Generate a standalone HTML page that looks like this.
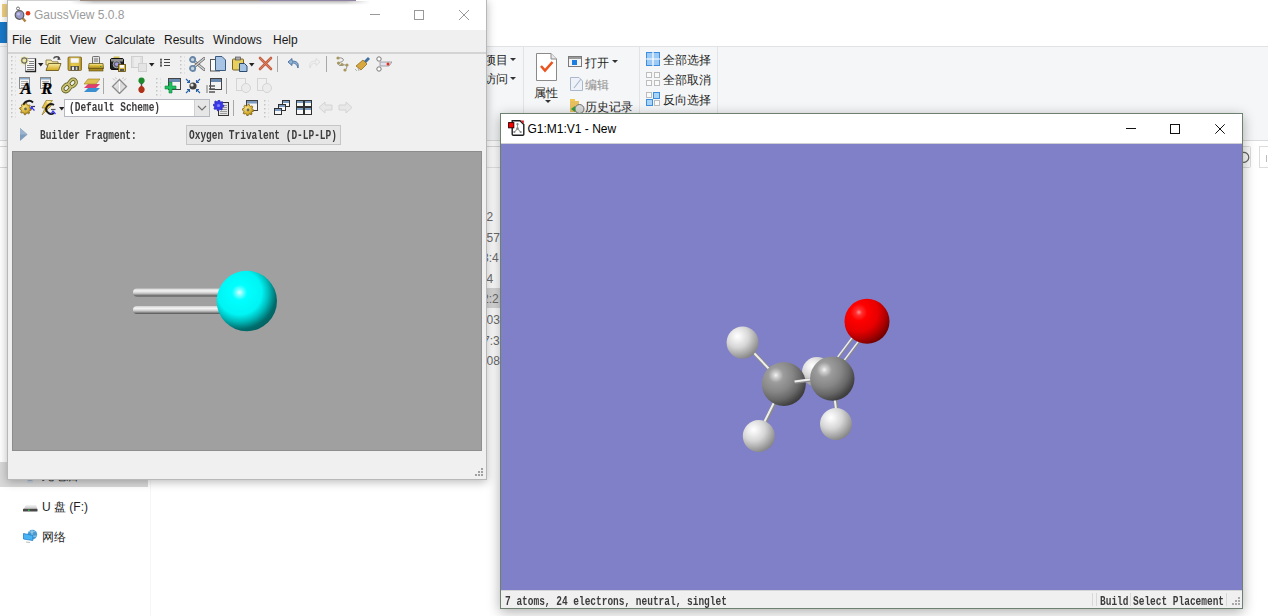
<!DOCTYPE html>
<html><head><meta charset="utf-8">
<style>
*{box-sizing:border-box;margin:0;padding:0}
html,body{width:1268px;height:616px;overflow:hidden;background:#fff;font-family:"Liberation Sans",sans-serif;position:relative}
.abs{position:absolute;display:block}
</style></head><body>

<div class="abs" style="left:0px;top:0px;width:1268px;height:616px;background:#fff;"></div>
<div class="abs" style="left:2px;top:4px;width:5px;height:13px;background:#f0d080;"></div>
<div class="abs" style="left:0px;top:22px;width:7px;height:21px;background:#1979ca;"></div>
<div class="abs" style="left:0px;top:43px;width:7px;height:3px;background:#f5f6f7;"></div>
<div class="abs" style="left:0px;top:46px;width:1268px;height:95px;background:#f5f6f7;border-top:1px solid #e1e2e3;border-bottom:1px solid #dadbdc"></div>
<div class="abs" style="left:484px;top:53.84px;font-size:12px;line-height:12px;color:#1e1e1e;font-family:"Liberation Sans",sans-serif;white-space:nowrap;letter-spacing:-0.5px">项目</div>
<svg class="abs" style="left:510px;top:58px;" width="6" height="4" viewBox="0 0 6 4"><path d="M0 0H6L3 3Z" fill="#333"/></svg>
<div class="abs" style="left:484px;top:72.84px;font-size:12px;line-height:12px;color:#1e1e1e;font-family:"Liberation Sans",sans-serif;white-space:nowrap;letter-spacing:-0.5px">访问</div>
<svg class="abs" style="left:510px;top:77px;" width="6" height="4" viewBox="0 0 6 4"><path d="M0 0H6L3 3Z" fill="#333"/></svg>
<div class="abs" style="left:523px;top:47px;width:1px;height:89px;background:#e2e3e4;"></div>
<svg class="abs" style="left:535px;top:52px;" width="23" height="30" viewBox="0 0 23 30"><path d="M1.5 1.5H16L21.5 7V28.5H1.5Z" fill="#fff" stroke="#8a8a8a"/><path d="M16 1.5V7H21.5" fill="#e8e8e8" stroke="#8a8a8a"/><path d="M6 14L10 18.5L17.5 10" fill="none" stroke="#e9541f" stroke-width="2.6"/></svg>
<div class="abs" style="left:534px;top:86.84px;font-size:12px;line-height:12px;color:#1e1e1e;font-family:"Liberation Sans",sans-serif;white-space:nowrap;letter-spacing:-0.5px">属性</div>
<svg class="abs" style="left:545px;top:100px;" width="6" height="4" viewBox="0 0 6 4"><path d="M0 0H6L3 3Z" fill="#333"/></svg>
<svg class="abs" style="left:568px;top:56px;" width="14" height="11" viewBox="0 0 14 11"><rect x=".5" y=".5" width="13" height="10" fill="#f4f4f4" stroke="#7a7a7a"/><rect x="1" y="1" width="12" height="2" fill="#9a9a9a"/><rect x="4" y="4" width="5" height="5" fill="#1a7fe0"/></svg>
<div class="abs" style="left:585px;top:56.84px;font-size:12px;line-height:12px;color:#1e1e1e;font-family:"Liberation Sans",sans-serif;white-space:nowrap;letter-spacing:-0.5px">打开</div>
<svg class="abs" style="left:612px;top:60px;" width="6" height="4" viewBox="0 0 6 4"><path d="M0 0H6L3 3Z" fill="#333"/></svg>
<svg class="abs" style="left:570px;top:77px;" width="13" height="14" viewBox="0 0 13 14"><path d="M.5 .5H9L12.5 4V13.5H.5Z" fill="#eef2f8" stroke="#aab8cc"/><path d="M4 11L11 2" stroke="#aab8cc" stroke-width="1.2"/></svg>
<div class="abs" style="left:585px;top:78.84px;font-size:12px;line-height:12px;color:#8d8d8d;font-family:"Liberation Sans",sans-serif;white-space:nowrap;letter-spacing:-0.5px">编辑</div>
<svg class="abs" style="left:569px;top:98px;" width="16" height="16" viewBox="0 0 16 16"><path d="M1 1H6V14H1Z" fill="#f0c850"/><rect x="1" y="3" width="9" height="11" fill="#e8c060"/><circle cx="10.5" cy="11" r="4.5" fill="#d8d8d8" stroke="#707070"/><path d="M2 11L6 8V14Z" fill="#2aa040"/></svg>
<div class="abs" style="left:585px;top:100.84px;font-size:12px;line-height:12px;color:#1e1e1e;font-family:"Liberation Sans",sans-serif;white-space:nowrap;letter-spacing:-0.5px">历史记录</div>
<div class="abs" style="left:639px;top:47px;width:1px;height:89px;background:#e2e3e4;"></div>
<svg class="abs" style="left:646px;top:52px;" width="14" height="14" viewBox="0 0 14 14"><rect x=".5" y=".5" width="13" height="13" fill="#9ccaf5" stroke="#3d8ee0"/><path d="M7 0V14M0 7H14" stroke="#fff" stroke-width="1.2"/></svg>
<div class="abs" style="left:663px;top:53.84px;font-size:12px;line-height:12px;color:#1e1e1e;font-family:"Liberation Sans",sans-serif;white-space:nowrap;letter-spacing:-0.5px">全部选择</div>
<svg class="abs" style="left:646px;top:72px;" width="14" height="14" viewBox="0 0 14 14"><rect x=".5" y=".5" width="5" height="5" fill="#fafafa" stroke="#bdbdbd"/><rect x="8.5" y=".5" width="5" height="5" fill="#fafafa" stroke="#bdbdbd"/><rect x=".5" y="8.5" width="5" height="5" fill="#fafafa" stroke="#bdbdbd"/><rect x="8.5" y="8.5" width="5" height="5" fill="#fafafa" stroke="#bdbdbd"/></svg>
<div class="abs" style="left:663px;top:73.84px;font-size:12px;line-height:12px;color:#1e1e1e;font-family:"Liberation Sans",sans-serif;white-space:nowrap;letter-spacing:-0.5px">全部取消</div>
<svg class="abs" style="left:646px;top:92px;" width="14" height="14" viewBox="0 0 14 14"><rect x=".5" y=".5" width="5" height="5" fill="#fafafa" stroke="#bdbdbd"/><rect x="7.5" y=".5" width="6" height="6" fill="#a8d4f8" stroke="#3d8ee0"/><rect x=".5" y="7.5" width="6" height="6" fill="#a8d4f8" stroke="#3d8ee0"/><rect x="8.5" y="8.5" width="5" height="5" fill="#fafafa" stroke="#bdbdbd"/></svg>
<div class="abs" style="left:663px;top:93.84px;font-size:12px;line-height:12px;color:#1e1e1e;font-family:"Liberation Sans",sans-serif;white-space:nowrap;letter-spacing:-0.5px">反向选择</div>
<div class="abs" style="left:717px;top:47px;width:1px;height:89px;background:#e2e3e4;"></div>
<div class="abs" style="left:0px;top:146px;width:1236px;height:22px;background:#fff;border-top:1px solid #d9d9d9;border-bottom:1px solid #d9d9d9"></div>
<svg class="abs" style="left:1226px;top:146px;" width="42" height="22" viewBox="0 0 42 22"><rect x=".5" y=".5" width="24" height="21" rx="1" fill="#fafafa" stroke="#dcdcdc"/><path d="M17 7.5A5 5 0 1 1 16.5 17" fill="none" stroke="#666" stroke-width="1.3" transform="translate(-0.5 -1)"/><rect x="33.5" y=".5" width="20" height="21" fill="#fff" stroke="#dcdcdc"/><path d="M40.5 9V16" stroke="#bbb" stroke-width="1"/></svg>
<div class="abs" style="left:486px;top:167px;width:14px;height:1px;background:#e5e5e5;"></div>
<div class="abs" style="left:150px;top:168px;width:1px;height:448px;background:#f6f6f6;"></div>
<div class="abs" style="left:0px;top:462px;width:148px;height:25px;background:#d9d9d9;"></div>
<svg class="abs" style="left:22px;top:476px;" width="16" height="8" viewBox="0 0 16 8"><path d="M2 3H14L9 5H7Z" fill="#9ab0c8"/><path d="M5 6H11" stroke="#b8c8d8"/></svg>
<svg class="abs" style="left:22px;top:504px;" width="16" height="9" viewBox="0 0 16 9"><path d="M1.5 5L4 1.5H14L15.5 5Z" fill="#d4d4d4"/><path d="M4 2H14" stroke="#f0f0f0" stroke-width="1"/><rect x="1" y="4.8" width="14.5" height="2.8" rx=".6" fill="#484848"/><rect x="6" y="5.6" width="1.6" height="1.2" fill="#30d040"/></svg>
<div class="abs" style="left:42px;top:469.84px;font-size:12px;line-height:12px;color:#1e1e1e;font-family:"Liberation Sans",sans-serif;white-space:nowrap;">此电脑</div>
<div class="abs" style="left:42px;top:501.34px;font-size:12px;line-height:12px;color:#1e1e1e;font-family:"Liberation Sans",sans-serif;white-space:nowrap;letter-spacing:-0.6px">U 盘 (F:)</div>
<svg class="abs" style="left:22px;top:528px;" width="16" height="16" viewBox="0 0 16 16"><circle cx="10.4" cy="6.6" r="4.8" fill="#4a9ad0"/><path d="M7 3C9 5 11 4 13 3M6.5 8C9 7 11 9 14.5 8M10 2V11" stroke="#b8e0f4" stroke-width=".8" fill="none"/><path d="M1.5 5.5L10.8 7.5V12.5L1.5 11Z" fill="#48b4f4" stroke="#2080c8" stroke-width=".8"/><path d="M4 13.5L8 14V15L4 14.5Z" fill="#bbb"/></svg>
<div class="abs" style="left:42px;top:530.84px;font-size:12px;line-height:12px;color:#1e1e1e;font-family:"Liberation Sans",sans-serif;white-space:nowrap;">网络</div>
<div class="abs" style="left:486px;top:288px;width:14px;height:20px;background:#d9d9d9;"></div>
<div class="abs" style="left:486px;top:200px;width:14px;height:180px;overflow:hidden">
<div class="abs" style="left:0.5px;top:9.84px;font-size:12px;line-height:14px;color:#6d6d6d;white-space:nowrap;font-family:"Liberation Sans",sans-serif">2</div>
<div class="abs" style="left:0.5px;top:30.84px;font-size:12px;line-height:14px;color:#6d6d6d;white-space:nowrap;font-family:"Liberation Sans",sans-serif">57</div>
<div class="abs" style="left:-4px;top:50.84px;font-size:12px;line-height:14px;color:#6d6d6d;white-space:nowrap;font-family:"Liberation Sans",sans-serif">3:4</div>
<div class="abs" style="left:0.5px;top:71.84px;font-size:12px;line-height:14px;color:#6d6d6d;white-space:nowrap;font-family:"Liberation Sans",sans-serif">4</div>
<div class="abs" style="left:-4px;top:91.84px;font-size:12px;line-height:14px;color:#6d6d6d;white-space:nowrap;font-family:"Liberation Sans",sans-serif">2:2</div>
<div class="abs" style="left:0.5px;top:112.84px;font-size:12px;line-height:14px;color:#6d6d6d;white-space:nowrap;font-family:"Liberation Sans",sans-serif">03</div>
<div class="abs" style="left:-3px;top:133.84px;font-size:12px;line-height:14px;color:#6d6d6d;white-space:nowrap;font-family:"Liberation Sans",sans-serif">7:3</div>
<div class="abs" style="left:0.5px;top:153.84px;font-size:12px;line-height:14px;color:#6d6d6d;white-space:nowrap;font-family:"Liberation Sans",sans-serif">08</div>
</div>
<div class="abs" style="left:7px;top:-1px;width:480px;height:481px;background:#f0f0f0;border:1px solid #b8b8b8;box-shadow:0 2px 9px rgba(0,0,0,.28)"></div>
<div class="abs" style="left:8px;top:0px;width:478px;height:30px;background:#fff;"></div>
<svg class="abs" style="left:14px;top:6px;" width="17" height="17" viewBox="0 0 17 17"><circle cx="4" cy="2.5" r="1.5" fill="#fff" stroke="#666" stroke-width=".9"/><path d="M4.5 4L5.5 6" stroke="#666" stroke-width="1"/><path d="M8.5 12L11.5 15.5" stroke="#b08040" stroke-width="2.4"/><circle cx="5.5" cy="9" r="4.3" fill="#9a9ac8" stroke="#5a5a5a" stroke-width="1.2"/><circle cx="4.5" cy="8" r="1.5" fill="#c0c0e8"/><circle cx="14" cy="7.2" r="2.3" fill="#e03010"/></svg>
<div class="abs" style="left:34px;top:8.84px;font-size:12px;line-height:12px;color:#9b9b9b;font-family:"Liberation Sans",sans-serif;white-space:nowrap;">GaussView 5.0.8</div>
<div class="abs" style="left:370px;top:14px;width:10px;height:1px;background:#999;"></div>
<svg class="abs" style="left:414px;top:10px;" width="10" height="10" viewBox="0 0 10 10"><rect x=".5" y=".5" width="9" height="9" fill="none" stroke="#999"/></svg>
<svg class="abs" style="left:459px;top:10px;" width="10" height="10" viewBox="0 0 10 10"><path d="M0 0L10 10M10 0L0 10" stroke="#999" stroke-width="1"/></svg>
<div class="abs" style="left:8px;top:0px;width:72px;height:1px;background:#d0d0d0;"></div>
<div class="abs" style="left:80px;top:0px;width:180px;height:1px;background:#9a8a80;"></div>
<div class="abs" style="left:260px;top:0px;width:96px;height:1px;background:#8e82a0;"></div>
<div class="abs" style="left:70px;top:1px;width:300px;height:4px;background:linear-gradient(rgba(0,0,0,.28),rgba(0,0,0,0));-webkit-mask-image:linear-gradient(90deg,transparent,#000 8%,#000 92%,transparent)"></div>
<div class="abs" style="left:12px;top:34.34px;font-size:12px;line-height:12px;color:#1a1a1a;font-family:"Liberation Sans",sans-serif;white-space:nowrap;">File</div>
<div class="abs" style="left:40px;top:34.34px;font-size:12px;line-height:12px;color:#1a1a1a;font-family:"Liberation Sans",sans-serif;white-space:nowrap;">Edit</div>
<div class="abs" style="left:70px;top:34.34px;font-size:12px;line-height:12px;color:#1a1a1a;font-family:"Liberation Sans",sans-serif;white-space:nowrap;">View</div>
<div class="abs" style="left:105px;top:34.34px;font-size:12px;line-height:12px;color:#1a1a1a;font-family:"Liberation Sans",sans-serif;white-space:nowrap;">Calculate</div>
<div class="abs" style="left:164px;top:34.34px;font-size:12px;line-height:12px;color:#1a1a1a;font-family:"Liberation Sans",sans-serif;white-space:nowrap;">Results</div>
<div class="abs" style="left:213px;top:34.34px;font-size:12px;line-height:12px;color:#1a1a1a;font-family:"Liberation Sans",sans-serif;white-space:nowrap;">Windows</div>
<div class="abs" style="left:273px;top:34.34px;font-size:12px;line-height:12px;color:#1a1a1a;font-family:"Liberation Sans",sans-serif;white-space:nowrap;">Help</div>
<div class="abs" style="left:8px;top:52px;width:478px;height:2px;background:#d4d4d4;"></div>
<svg class="abs" style="left:11px;top:56px;" width="6" height="20" viewBox="0 0 6 20"><rect x="0" y="0" width="1.5" height="1.5" fill="#c4c4c4"/><rect x="4" y="0.5" width="1" height="1" fill="#d0d0d0"/><rect x="0" y="4" width="1.5" height="1.5" fill="#c4c4c4"/><rect x="4" y="4.5" width="1" height="1" fill="#d0d0d0"/><rect x="0" y="8" width="1.5" height="1.5" fill="#c4c4c4"/><rect x="4" y="8.5" width="1" height="1" fill="#d0d0d0"/><rect x="0" y="12" width="1.5" height="1.5" fill="#c4c4c4"/><rect x="4" y="12.5" width="1" height="1" fill="#d0d0d0"/><rect x="0" y="16" width="1.5" height="1.5" fill="#c4c4c4"/><rect x="4" y="16.5" width="1" height="1" fill="#d0d0d0"/></svg>
<svg class="abs" style="left:180px;top:56px;" width="6" height="20" viewBox="0 0 6 20"><rect x="0" y="0" width="1.5" height="1.5" fill="#c4c4c4"/><rect x="4" y="0.5" width="1" height="1" fill="#d0d0d0"/><rect x="0" y="4" width="1.5" height="1.5" fill="#c4c4c4"/><rect x="4" y="4.5" width="1" height="1" fill="#d0d0d0"/><rect x="0" y="8" width="1.5" height="1.5" fill="#c4c4c4"/><rect x="4" y="8.5" width="1" height="1" fill="#d0d0d0"/><rect x="0" y="12" width="1.5" height="1.5" fill="#c4c4c4"/><rect x="4" y="12.5" width="1" height="1" fill="#d0d0d0"/><rect x="0" y="16" width="1.5" height="1.5" fill="#c4c4c4"/><rect x="4" y="16.5" width="1" height="1" fill="#d0d0d0"/></svg>
<svg class="abs" style="left:11px;top:78px;" width="6" height="20" viewBox="0 0 6 20"><rect x="0" y="0" width="1.5" height="1.5" fill="#c4c4c4"/><rect x="4" y="0.5" width="1" height="1" fill="#d0d0d0"/><rect x="0" y="4" width="1.5" height="1.5" fill="#c4c4c4"/><rect x="4" y="4.5" width="1" height="1" fill="#d0d0d0"/><rect x="0" y="8" width="1.5" height="1.5" fill="#c4c4c4"/><rect x="4" y="8.5" width="1" height="1" fill="#d0d0d0"/><rect x="0" y="12" width="1.5" height="1.5" fill="#c4c4c4"/><rect x="4" y="12.5" width="1" height="1" fill="#d0d0d0"/><rect x="0" y="16" width="1.5" height="1.5" fill="#c4c4c4"/><rect x="4" y="16.5" width="1" height="1" fill="#d0d0d0"/></svg>
<svg class="abs" style="left:156px;top:78px;" width="6" height="20" viewBox="0 0 6 20"><rect x="0" y="0" width="1.5" height="1.5" fill="#c4c4c4"/><rect x="4" y="0.5" width="1" height="1" fill="#d0d0d0"/><rect x="0" y="4" width="1.5" height="1.5" fill="#c4c4c4"/><rect x="4" y="4.5" width="1" height="1" fill="#d0d0d0"/><rect x="0" y="8" width="1.5" height="1.5" fill="#c4c4c4"/><rect x="4" y="8.5" width="1" height="1" fill="#d0d0d0"/><rect x="0" y="12" width="1.5" height="1.5" fill="#c4c4c4"/><rect x="4" y="12.5" width="1" height="1" fill="#d0d0d0"/><rect x="0" y="16" width="1.5" height="1.5" fill="#c4c4c4"/><rect x="4" y="16.5" width="1" height="1" fill="#d0d0d0"/></svg>
<svg class="abs" style="left:11px;top:100px;" width="6" height="20" viewBox="0 0 6 20"><rect x="0" y="0" width="1.5" height="1.5" fill="#c4c4c4"/><rect x="4" y="0.5" width="1" height="1" fill="#d0d0d0"/><rect x="0" y="4" width="1.5" height="1.5" fill="#c4c4c4"/><rect x="4" y="4.5" width="1" height="1" fill="#d0d0d0"/><rect x="0" y="8" width="1.5" height="1.5" fill="#c4c4c4"/><rect x="4" y="8.5" width="1" height="1" fill="#d0d0d0"/><rect x="0" y="12" width="1.5" height="1.5" fill="#c4c4c4"/><rect x="4" y="12.5" width="1" height="1" fill="#d0d0d0"/><rect x="0" y="16" width="1.5" height="1.5" fill="#c4c4c4"/><rect x="4" y="16.5" width="1" height="1" fill="#d0d0d0"/></svg>
<svg class="abs" style="left:264px;top:100px;" width="6" height="20" viewBox="0 0 6 20"><rect x="0" y="0" width="1.5" height="1.5" fill="#c4c4c4"/><rect x="4" y="0.5" width="1" height="1" fill="#d0d0d0"/><rect x="0" y="4" width="1.5" height="1.5" fill="#c4c4c4"/><rect x="4" y="4.5" width="1" height="1" fill="#d0d0d0"/><rect x="0" y="8" width="1.5" height="1.5" fill="#c4c4c4"/><rect x="4" y="8.5" width="1" height="1" fill="#d0d0d0"/><rect x="0" y="12" width="1.5" height="1.5" fill="#c4c4c4"/><rect x="4" y="12.5" width="1" height="1" fill="#d0d0d0"/><rect x="0" y="16" width="1.5" height="1.5" fill="#c4c4c4"/><rect x="4" y="16.5" width="1" height="1" fill="#d0d0d0"/></svg>
<svg class="abs" style="left:19px;top:55px;" width="18" height="18" viewBox="0 0 18 18"><rect x="6.5" y="3.5" width="10" height="13" fill="#f8f8f8" stroke="#909090"/><path d="M16.5 3.5V16.5H6.5" fill="none" stroke="#222" stroke-width="1.3"/><path d="M10 6.5H15M10 8.5H15M8 10.5H15M8 12.5H15M8 14.5H15" stroke="#707070" stroke-width=".9"/><g stroke="#ece49a" stroke-width="1.5"><path d="M5.3 .8V10.2M.6 5.5H10M2 2.2L8.6 8.8M8.6 2.2L2 8.8"/></g><circle cx="5.3" cy="5.5" r="2.6" fill="#e8e0a8" stroke="#6a6a5a" stroke-width="1.1"/><circle cx="5.3" cy="5.5" r="1" fill="#f4eca0"/></svg>
<svg class="abs" style="left:38px;top:63px;" width="6" height="4" viewBox="0 0 6 4"><path d="M0 0H5.5L2.75 3.5Z" fill="#222"/></svg>
<svg class="abs" style="left:45px;top:55px;" width="17" height="17" viewBox="0 0 17 17"><defs><linearGradient id="fo" x1="0" y1="0" x2="0" y2="1"><stop offset="0" stop-color="#f6eca8"/><stop offset="1" stop-color="#d4a818"/></linearGradient></defs><path d="M8.5 3.5A3.5 3 0 0 1 14.5 3" fill="none" stroke="#505050" stroke-width="1.4"/><path d="M13 1.5L16 4.5L12.5 5Z" fill="#404040"/><path d="M1 5H6L7.5 6.8H13V10H1Z" fill="#efe3a0" stroke="#7a6a30" stroke-width=".8"/><path d="M1 15.5L3.5 8.5H16L13.5 15.5Z" fill="url(#fo)" stroke="#6a5a20" stroke-width=".9"/></svg>
<svg class="abs" style="left:67px;top:56px;" width="16" height="16" viewBox="0 0 16 16"><defs><linearGradient id="sv" x1="0" y1="0" x2="1" y2="0"><stop offset="0" stop-color="#b89828"/><stop offset=".3" stop-color="#e8cc50"/><stop offset=".8" stop-color="#e0c040"/><stop offset="1" stop-color="#a08018"/></linearGradient></defs><rect x="1" y="1" width="13.5" height="13.5" rx="1" fill="url(#sv)" stroke="#786020" stroke-width=".8"/><rect x="3.5" y="2" width="8.5" height="5" fill="#f8f8f8" stroke="#c8b060" stroke-width=".5"/><rect x="3.5" y="10" width="8.5" height="4.5" fill="#505050"/><rect x="5" y="10.8" width="2" height="3.2" fill="#e8e8e8"/><rect x="8.8" y="10.8" width="1.5" height="3.2" fill="#c8c8c8"/></svg>
<svg class="abs" style="left:88px;top:56px;" width="16" height="16" viewBox="0 0 16 16"><defs><linearGradient id="pr" x1="0" y1="0" x2="0" y2="1"><stop offset="0" stop-color="#f4ecb0"/><stop offset=".4" stop-color="#e0c040"/><stop offset="1" stop-color="#a08018"/></linearGradient></defs><rect x="4.5" y=".5" width="7" height="7.5" rx=".8" fill="#e4e4e4" stroke="#606060" stroke-width=".9"/><path d="M6 3H10M6 5H10" stroke="#606060" stroke-width=".9"/><path d="M1 7.5H15L15.5 12.5H.5Z" fill="url(#pr)" stroke="#6a5a20" stroke-width=".8"/><rect x="1" y="12.5" width="14" height="2.5" fill="#a88a20" stroke="#5a4a10" stroke-width=".6"/><rect x="12" y="10" width="1.5" height="1" fill="#40a040"/></svg>
<svg class="abs" style="left:110px;top:56px;" width="16" height="16" viewBox="0 0 16 16"><rect x="3.5" y=".5" width="6" height="2.5" fill="#d0b850"/><rect x=".5" y="2.5" width="13" height="11" rx="1.5" fill="#202020" stroke="#101010"/><rect x="1" y="3" width="12" height="2.5" fill="#909090"/><circle cx="6.8" cy="8.3" r="3.6" fill="#606070" stroke="#a8a8a8" stroke-width="1"/><circle cx="6.8" cy="8.3" r="1.8" fill="#a8a0e0"/><rect x="8.5" y="8.5" width="7" height="7" fill="#d8b840" stroke="#5a4a10" stroke-width=".8"/><rect x="10" y="9" width="4" height="2.8" fill="#fafafa"/><rect x="10" y="13" width="4" height="2" fill="#555"/></svg>
<svg class="abs" style="left:131px;top:56px;" width="16" height="16" viewBox="0 0 16 16"><rect x=".5" y=".5" width="11" height="11" fill="#ececec" stroke="#d0d0d0"/><path d="M2 1V11M10 1V11" stroke="#d8d8d8"/><rect x="7.5" y="7.5" width="8" height="8" fill="#e4e4e4" stroke="#d0d0d0"/></svg>
<svg class="abs" style="left:149px;top:63px;" width="6" height="4" viewBox="0 0 6 4"><path d="M0 0H5.5L2.75 3.5Z" fill="#222"/></svg>
<svg class="abs" style="left:160px;top:58px;" width="11" height="10" viewBox="0 0 11 10"><path d="M4 1.5H10M4 4.5H10M4 7.5H10" stroke="#444" stroke-width="1.2"/><path d="M1 1V9" stroke="#666" stroke-width="1"/><circle cx="1" cy="1.5" r="1" fill="#555"/><circle cx="1" cy="4.5" r="1" fill="#555"/><circle cx="1" cy="7.5" r="1" fill="#555"/></svg>
<svg class="abs" style="left:189px;top:56px;" width="16" height="16" viewBox="0 0 16 16"><path d="M5 5L15 13.5" stroke="#606060" stroke-width="2.8" stroke-linecap="round"/><path d="M5 5L15 13.5" stroke="#d8d8d8" stroke-width="1.4" stroke-linecap="round"/><path d="M5 11L15 2.5" stroke="#606060" stroke-width="2.8" stroke-linecap="round"/><path d="M5 11L15 2.5" stroke="#d0d0d0" stroke-width="1.4" stroke-linecap="round"/><circle cx="3.6" cy="3.6" r="2.6" fill="#c8d4e0" stroke="#6888a8" stroke-width="1.8"/><circle cx="3.6" cy="12.4" r="2.6" fill="#c8d4e0" stroke="#6888a8" stroke-width="1.8"/></svg>
<svg class="abs" style="left:210px;top:56px;" width="16" height="16" viewBox="0 0 16 16"><rect x=".5" y="3.5" width="9" height="11.5" fill="#fafafa" stroke="#555"/><path d="M5.5 .5H12L15.5 4V14.5H5.5Z" fill="#a8c4e4" stroke="#3a5a80"/></svg>
<svg class="abs" style="left:232px;top:56px;" width="16" height="16" viewBox="0 0 16 16"><rect x=".5" y="3" width="11" height="11" rx="1" fill="#e8d060" stroke="#7a6420"/><rect x="3.5" y="1" width="5" height="3" fill="#aaa" stroke="#555" stroke-width=".7"/><path d="M7.5 7.5H12.5L15 10V15.5H7.5Z" fill="#a8c4e4" stroke="#2a4a70"/></svg>
<svg class="abs" style="left:249px;top:63px;" width="6" height="4" viewBox="0 0 6 4"><path d="M0 0H5.5L2.75 3.5Z" fill="#222"/></svg>
<svg class="abs" style="left:258px;top:56px;" width="15" height="15" viewBox="0 0 15 15"><path d="M2 2L13 13M13 2L2 13" stroke="#c06040" stroke-width="2.6" stroke-linecap="round"/><path d="M2 2L13 13M13 2L2 13" stroke="#e08060" stroke-width="1" stroke-linecap="round"/></svg>
<div class="abs" style="left:277px;top:56px;width:1px;height:16px;background:#a8a8a8;"></div>
<svg class="abs" style="left:287px;top:57px;" width="13" height="12" viewBox="0 0 13 12"><path d="M11 11C12 6 10 4 5 4V1.5L1 5L5 8.5V6C9 6 10 8 11 11Z" fill="#90b4d8" stroke="#3a6090" stroke-width=".8"/></svg>
<svg class="abs" style="left:308px;top:57px;" width="13" height="12" viewBox="0 0 13 12"><path d="M2 11C1 6 3 4 8 4V1.5L12 5L8 8.5V6C4 6 3 8 2 11Z" fill="#f0f0f0" stroke="#d8d8d8" stroke-width=".8"/></svg>
<div class="abs" style="left:326px;top:56px;width:1px;height:16px;background:#a8a8a8;"></div>
<svg class="abs" style="left:336px;top:56px;" width="14" height="16" viewBox="0 0 14 16"><path d="M2 2C8 1 9 5 5 6C1 7 2 11 7 9C11 8 12 12 9 14" fill="none" stroke="#777" stroke-width=".8"/><circle cx="2" cy="2" r="1.6" fill="#a89860"/><circle cx="2.5" cy="7" r="1.6" fill="#a89860"/><circle cx="6" cy="8.5" r="1.6" fill="#a89860"/><circle cx="11" cy="9" r="1.6" fill="#a89860"/><circle cx="9" cy="14" r="1.6" fill="#a89860"/></svg>
<svg class="abs" style="left:355px;top:56px;" width="15" height="16" viewBox="0 0 15 16"><path d="M9 5L13 1L15 3L11 7Z" fill="#4070a0"/><path d="M1 10L8 4L12 8L6 14Z" fill="#d8a840" stroke="#8a6010" stroke-width=".7"/><path d="M0 13L2 15M3 12L4 15" stroke="#999" stroke-width=".7"/></svg>
<svg class="abs" style="left:376px;top:56px;" width="16" height="16" viewBox="0 0 16 16"><circle cx="3" cy="3" r="2.2" fill="#fff" stroke="#777" stroke-width="1"/><circle cx="3" cy="13" r="2.2" fill="#fff" stroke="#777" stroke-width="1"/><path d="M4 6L16 6L13 10L4 10Z" fill="#e0e0f0" stroke="#888" stroke-width=".7"/><circle cx="12" cy="8" r="1.5" fill="#e03020"/></svg>
<svg class="abs" style="left:19px;top:77px;" width="16" height="17" viewBox="0 0 16 17"><rect x=".5" y=".5" width="10" height="11" fill="#f4f4f4" stroke="#888"/><rect x="1" y="1" width="9" height="1.5" fill="#8ac"/><path d="M2 4.5H9M2 6.5H9M2 8.5H9M2 10.5H9" stroke="#999" stroke-width=".8"/><text x="1.5" y="16.5" font-family="Liberation Serif" font-style="italic" font-weight="bold" font-size="17" fill="#000" stroke="#000" stroke-width=".3">A</text></svg>
<svg class="abs" style="left:40px;top:77px;" width="16" height="17" viewBox="0 0 16 17"><rect x=".5" y=".5" width="10" height="11" fill="#f4f4f4" stroke="#888"/><rect x="1" y="1" width="9" height="1.5" fill="#8ac"/><path d="M2 4.5H9M2 6.5H9M2 8.5H9M2 10.5H9" stroke="#999" stroke-width=".8"/><text x="1.5" y="16.5" font-family="Liberation Serif" font-style="italic" font-weight="bold" font-size="16" fill="#000" stroke="#000" stroke-width=".3">R</text></svg>
<svg class="abs" style="left:61px;top:77px;" width="17" height="17" viewBox="0 0 17 17"><g fill="none" stroke="#5a5a20" stroke-width="3.4"><rect x="1.5" y="8" width="8" height="6" rx="3" transform="rotate(-45 5.5 11)"/><rect x="7.5" y="3" width="8" height="6" rx="3" transform="rotate(-45 11.5 6)"/></g><g fill="none" stroke="#c8c070" stroke-width="1.8"><rect x="1.5" y="8" width="8" height="6" rx="3" transform="rotate(-45 5.5 11)"/><rect x="7.5" y="3" width="8" height="6" rx="3" transform="rotate(-45 11.5 6)"/></g></svg>
<svg class="abs" style="left:84px;top:77px;" width="16" height="17" viewBox="0 0 16 17"><path d="M0 15L4 11H16L12 15Z" fill="#3a90d0"/><path d="M0 11L4 7H16L12 11Z" fill="#e04070"/><path d="M0 7L4 2H16L12 7Z" fill="#e0c050" stroke="#a08020" stroke-width=".6"/></svg>
<div class="abs" style="left:103px;top:78px;width:1px;height:16px;background:#a8a8a8;"></div>
<svg class="abs" style="left:111px;top:77px;" width="17" height="17" viewBox="0 0 17 17"><defs><linearGradient id="dm" x1="0" y1="0" x2="1" y2="1"><stop offset="0" stop-color="#fafafa"/><stop offset=".5" stop-color="#d8d8d8"/><stop offset="1" stop-color="#f0f0f0"/></linearGradient></defs><path d="M8.5 2.5L15.5 9.5L8.5 16.5L1.5 9.5Z" fill="url(#dm)" stroke="#8a8a8a" stroke-width="1.3"/><path d="M8.5 4V15" stroke="#fff" stroke-width="1"/><path d="M2 1.5L4 3.5M15 1.5L13 3.5M4.5 .5L5.5 2M12.5 .5L11.5 2" stroke="#b0b0b0" stroke-width=".8"/></svg>
<svg class="abs" style="left:137px;top:77px;" width="9" height="17" viewBox="0 0 9 17"><path d="M4.5 .5C7 .5 8 2.5 7.5 4.5C7 6 5.5 7 4.5 7.5C3.5 7 2 6 1.5 4.5C1 2.5 2 .5 4.5 .5Z" fill="#1a8a2a"/><rect x="3.8" y="6" width="1.4" height="3" fill="#555"/><path d="M4.5 8.5C5.5 9 7 10 7.5 11.5C8 13.5 7 16 4.5 16C2 16 1 13.5 1.5 11.5C2 10 3.5 9 4.5 8.5Z" fill="#b03018"/></svg>
<svg class="abs" style="left:164px;top:78px;" width="17" height="16" viewBox="0 0 17 16"><rect x="4.5" y=".5" width="12" height="11" fill="#f4f4f4" stroke="#444"/><rect x="5" y="1" width="11" height="3" fill="#6a8ab0"/><path d="M5 9H9V5H12V9H16V12H12V16H9V12H5Z" transform="translate(-4 -1)" fill="#20c060" stroke="#108040" stroke-width=".6"/></svg>
<svg class="abs" style="left:185px;top:78px;" width="16" height="16" viewBox="0 0 16 16"><circle cx="8" cy="8" r="3.6" fill="#404040"/><circle cx="7" cy="7" r="1.6" fill="#e0e0e0"/><g stroke="#2a60a8" stroke-width="1.1" fill="none"><path d="M1 1L4.5 4.5M4.5 2V4.5H2M15 1L11.5 4.5M11.5 2V4.5H14M1 15L4.5 11.5M2 11.5H4.5V14M15 15L11.5 11.5M14 11.5H11.5V14"/></g></svg>
<svg class="abs" style="left:206px;top:78px;" width="16" height="16" viewBox="0 0 16 16"><rect x="4.5" y=".5" width="11" height="11" fill="#f4f4f4" stroke="#444"/><rect x="5" y="1" width="10" height="3" fill="#6a8ab0"/><path d="M3 8H9M3 11H9M3 14H9" stroke="#555" stroke-width="1.6"/><path d="M1 7V15" stroke="#777"/></svg>
<div class="abs" style="left:226px;top:78px;width:1px;height:16px;background:#a8a8a8;"></div>
<svg class="abs" style="left:236px;top:78px;" width="15" height="16" viewBox="0 0 15 16"><rect x=".5" y=".5" width="9" height="12" fill="#f0f0f0" stroke="#d4d4d4"/><circle cx="10" cy="10" r="4.5" fill="#ececec" stroke="#d4d4d4"/></svg>
<svg class="abs" style="left:257px;top:78px;" width="15" height="16" viewBox="0 0 15 16"><rect x=".5" y=".5" width="9" height="12" fill="#f0f0f0" stroke="#d4d4d4"/><circle cx="10" cy="10" r="4.5" fill="#ececec" stroke="#d4d4d4"/></svg>
<svg class="abs" style="left:19px;top:99px;" width="17" height="17" viewBox="0 0 17 17"><defs><radialGradient id="gg" cx=".4" cy=".35" r=".7"><stop offset="0" stop-color="#f8e890"/><stop offset=".6" stop-color="#d8b030"/><stop offset="1" stop-color="#8a6a10"/></radialGradient></defs><path d="M4.5 6.5A5.5 5 0 0 1 14 3.5" fill="none" stroke="#1a1a1a" stroke-width="2"/><path d="M12 7.5H16" stroke="#333" stroke-width="1.2"/><polygon points="12.30,10.00 12.19,11.13 10.57,11.68 10.16,12.44 10.60,14.10 9.72,14.82 8.18,14.07 7.36,14.32 6.50,15.80 5.37,15.69 4.82,14.07 4.06,13.66 2.40,14.10 1.68,13.22 2.43,11.68 2.18,10.86 0.70,10.00 0.81,8.87 2.43,8.32 2.84,7.56 2.40,5.90 3.28,5.18 4.82,5.93 5.64,5.68 6.50,4.20 7.63,4.31 8.18,5.93 8.94,6.34 10.60,5.90 11.32,6.78 10.57,8.32 10.82,9.14" fill="url(#gg)" stroke="#7a5a10" stroke-width="0.7"/><circle cx="6.5" cy="10" r="1.4" fill="#6a6a50"/><path d="M12 8L15.5 11.5M12 8H14M12 8V10" stroke="#3838f0" stroke-width="1.3" fill="none"/></svg>
<svg class="abs" style="left:40px;top:100px;" width="17" height="16" viewBox="0 0 17 16"><path d="M6 .5H12.5L8.5 5.5H11.5L2 15L5 8H2Z" fill="#e8c448" stroke="#8a6a20" stroke-width=".6"/><path d="M6.5 1H11L8 5" fill="#f4e8a0"/><path d="M14 5A5 4.8 0 1 0 14 13" fill="none" stroke="#1a1a1a" stroke-width="2"/><path d="M11 9.5H15.5" stroke="#555" stroke-width="1.2"/><path d="M11 14L13 11L15.5 14" stroke="#3838f0" stroke-width="1.3" fill="none"/></svg>
<svg class="abs" style="left:59px;top:107px;" width="6" height="4" viewBox="0 0 6 4"><path d="M0 0H5.5L2.75 3.5Z" fill="#222"/></svg>
<div class="abs" style="left:64px;top:99px;width:146px;height:18px;background:#fff;border:1px solid #b4b8c0"></div>
<div class="abs" style="left:194px;top:100px;width:15px;height:16px;background:#e6e6e6;border-left:1px solid #d0d0d0"></div>
<svg class="abs" style="left:197px;top:105px;" width="10" height="6" viewBox="0 0 10 6"><path d="M1 1L5 5L9 1" fill="none" stroke="#707070" stroke-width="1.1"/></svg>
<svg class="abs" style="left:213px;top:100px;" width="16" height="16" viewBox="0 0 16 16"><rect x="5.5" y="2.5" width="10" height="13" fill="#e4e4e4" stroke="#333"/><path d="M7 5.5H14M7 7.5H14M7 9.5H14M7 11.5H14M7 13.5H14" stroke="#888" stroke-width=".8"/><polygon points="11.00,5.50 10.89,6.57 9.38,7.11 8.99,7.83 9.39,9.39 8.56,10.07 7.11,9.38 6.32,9.62 5.50,11.00 4.43,10.89 3.89,9.38 3.17,8.99 1.61,9.39 0.93,8.56 1.62,7.11 1.38,6.32 0.00,5.50 0.11,4.43 1.62,3.89 2.01,3.17 1.61,1.61 2.44,0.93 3.89,1.62 4.68,1.38 5.50,0.00 6.57,0.11 7.11,1.62 7.83,2.01 9.39,1.61 10.07,2.44 9.38,3.89 9.62,4.68" fill="#3838e8" stroke="#2020a0" stroke-width="0.6"/><circle cx="5.5" cy="5.5" r="1.6" fill="#8080ff"/></svg>
<div class="abs" style="left:233px;top:100px;width:1px;height:16px;background:#a8a8a8;"></div>
<svg class="abs" style="left:242px;top:100px;" width="16" height="16" viewBox="0 0 16 16"><defs><radialGradient id="gg2" cx=".4" cy=".35" r=".7"><stop offset="0" stop-color="#f8e890"/><stop offset=".6" stop-color="#d8b030"/><stop offset="1" stop-color="#8a6a10"/></radialGradient></defs><rect x="4.5" y=".5" width="11" height="10" fill="#f4f4f4" stroke="#404040"/><rect x="5" y="1" width="10" height="2.5" fill="#7a9ac0"/><polygon points="11.80,10.00 11.69,11.13 10.07,11.68 9.66,12.44 10.10,14.10 9.22,14.82 7.68,14.07 6.86,14.32 6.00,15.80 4.87,15.69 4.32,14.07 3.56,13.66 1.90,14.10 1.18,13.22 1.93,11.68 1.68,10.86 0.20,10.00 0.31,8.87 1.93,8.32 2.34,7.56 1.90,5.90 2.78,5.18 4.32,5.93 5.14,5.68 6.00,4.20 7.13,4.31 7.68,5.93 8.44,6.34 10.10,5.90 10.82,6.78 10.07,8.32 10.32,9.14" fill="url(#gg2)" stroke="#7a5a10" stroke-width="0.7"/><circle cx="6" cy="10" r="1.4" fill="#6a6a60"/></svg>
<svg class="abs" style="left:274px;top:100px;" width="17" height="15" viewBox="0 0 17 15"><rect x="8.5" y="0.5" width="7" height="6" fill="#f8f8f8" stroke="#303030"/><rect x="9" y="1" width="6" height="2" fill="#7a9ac0"/><rect x="4.5" y="4.5" width="7" height="6" fill="#f8f8f8" stroke="#303030"/><rect x="5" y="5" width="6" height="2" fill="#7a9ac0"/><rect x="0.5" y="8.5" width="7" height="6" fill="#f8f8f8" stroke="#303030"/><rect x="1" y="9" width="6" height="2" fill="#7a9ac0"/></svg>
<svg class="abs" style="left:296px;top:100px;" width="16" height="15" viewBox="0 0 16 15"><rect x="0.5" y="0.5" width="7" height="6" fill="#f8f8f8" stroke="#303030"/><rect x="1" y="1" width="6" height="2" fill="#7a9ac0"/><rect x="8.5" y="0.5" width="7" height="6" fill="#f8f8f8" stroke="#303030"/><rect x="9" y="1" width="6" height="2" fill="#7a9ac0"/><rect x="0.5" y="7.5" width="7" height="7" fill="#f8f8f8" stroke="#303030"/><rect x="1" y="8" width="6" height="2" fill="#7a9ac0"/><rect x="8.5" y="7.5" width="7" height="7" fill="#f8f8f8" stroke="#303030"/><rect x="9" y="8" width="6" height="2" fill="#7a9ac0"/></svg>
<svg class="abs" style="left:318px;top:101px;" width="15" height="13" viewBox="0 0 15 13"><path d="M1 6.5L7 1V4H14V9H7V12Z" fill="#e8e8e8" stroke="#d4d4d4"/></svg>
<svg class="abs" style="left:338px;top:101px;" width="15" height="13" viewBox="0 0 15 13"><path d="M14 6.5L8 1V4H1V9H8V12Z" fill="#e8e8e8" stroke="#d4d4d4"/></svg>
<svg class="abs" style="left:20px;top:128px;" width="8" height="13" viewBox="0 0 8 13"><path d="M0 0L7.5 6.5L0 13Z" fill="#7f9cbc"/><path d="M0 0L7.5 6.5L0 6.5Z" fill="#9ab4d0"/></svg>
<div class="abs" style="left:186px;top:125px;width:155px;height:20px;background:#e6e6e6;border:1px solid #c6c6c6"></div>
<div class="abs" style="left:12px;top:151px;width:470px;height:300px;background:#a0a0a0;border-top:1px solid #8c8c8c;border-left:1px solid #8c8c8c;border-right:1px solid #8e8e8e;border-bottom:1px solid #8e8e8e"></div>
<svg class="abs" style="left:475px;top:468px;" width="9" height="9" viewBox="0 0 9 9"><g fill="#a0a0a0"><rect x="6" y="0" width="2" height="2"/><rect x="3" y="3" width="2" height="2"/><rect x="6" y="3" width="2" height="2"/><rect x="0" y="6" width="2" height="2"/><rect x="3" y="6" width="2" height="2"/><rect x="6" y="6" width="2" height="2"/></g></svg>
<div class="abs" style="left:69px;top:101.80px;font-size:12px;line-height:12px;color:#3c3c3c;font-family:'Liberation Mono',monospace;white-space:pre;transform:scaleX(0.79);transform-origin:0 0;font-weight:bold;">(Default Scheme)</div>
<div class="abs" style="left:40px;top:130.10px;font-size:12px;line-height:12px;color:#3c3c3c;font-family:'Liberation Mono',monospace;white-space:pre;transform:scaleX(0.79);transform-origin:0 0;font-weight:bold;">Builder Fragment:</div>
<div class="abs" style="left:189px;top:130.10px;font-size:12px;line-height:12px;color:#3c3c3c;font-family:'Liberation Mono',monospace;white-space:pre;transform:scaleX(0.79);transform-origin:0 0;font-weight:bold;">Oxygen Trivalent (D-LP-LP)</div>
<svg class="abs" style="left:12px;top:151px" width="470" height="300" viewBox="12 151 470 300">
<defs>
<linearGradient id="rod" x1="0" y1="0" x2="0" y2="1"><stop offset="0" stop-color="#d0d0d0"/><stop offset=".3" stop-color="#f4f4f4"/><stop offset=".6" stop-color="#c8c8c8"/><stop offset="1" stop-color="#505050"/></linearGradient>
<radialGradient id="cy" cx=".38" cy=".36" r=".8"><stop offset="0" stop-color="#e0ffff"/><stop offset=".08" stop-color="#60ffff"/><stop offset=".16" stop-color="#00ffff"/><stop offset=".46" stop-color="#00f4f4"/><stop offset=".6" stop-color="#00bcbc"/><stop offset=".76" stop-color="#006c6c"/><stop offset="1" stop-color="#005050"/></radialGradient>
</defs>
<rect x="133" y="288.5" width="100" height="8" rx="4" fill="url(#rod)"/>
<rect x="133" y="306" width="100" height="8" rx="4" fill="url(#rod)"/>
<circle cx="246.8" cy="301" r="30.2" fill="url(#cy)"/>
</svg>
<div class="abs" style="left:500px;top:113px;width:743px;height:496px;background:#f0f0f0;border:1px solid #6e8070;box-shadow:0 3px 12px rgba(0,0,0,.32)"></div>
<div class="abs" style="left:501px;top:114px;width:741px;height:30px;background:#fff;"></div>
<div class="abs" style="left:501px;top:143px;width:741px;height:1px;background:#cfcfd4;"></div>
<svg class="abs" style="left:508px;top:119px;" width="17" height="18" viewBox="0 0 17 18"><path d="M4.2 1.7H12L15.8 5.5V15.2Q15.8 16.3 14.7 16.3H5.3Q4.2 16.3 4.2 15.2Z" fill="#fff" stroke="#1e1e1e" stroke-width="1.4"/><path d="M12.5 1.5L15.8 4.8V1.5Z" fill="#e02020"/><path d="M9.5 5V9.5L6.5 13M9.5 9.5L12.5 13" stroke="#9a9a9a" stroke-width="1.1" fill="none"/><circle cx="9.5" cy="5.2" r="1.1" fill="#888"/><circle cx="9.5" cy="9.5" r="1.2" fill="#888"/><circle cx="6.3" cy="13" r="1.1" fill="#888"/><circle cx="12.7" cy="13" r="1.1" fill="#888"/><rect x=".6" y="3.6" width="5.2" height="5.2" fill="#ff0000" stroke="#3a0000" stroke-width="1"/></svg>
<div class="abs" style="left:527.5px;top:123.04px;font-size:12px;line-height:12px;color:#000;font-family:"Liberation Sans",sans-serif;white-space:nowrap;letter-spacing:0.12px">G1:M1:V1 - New</div>
<div class="abs" style="left:1126px;top:128px;width:10px;height:1px;background:#111;"></div>
<svg class="abs" style="left:1170px;top:124px;" width="10" height="10" viewBox="0 0 10 10"><rect x=".5" y=".5" width="9" height="9" fill="none" stroke="#111"/></svg>
<svg class="abs" style="left:1215px;top:124px;" width="10" height="10" viewBox="0 0 10 10"><path d="M.3 .3L9.7 9.7M9.7 .3L.3 9.7" stroke="#111" stroke-width="1"/></svg>
<div class="abs" style="left:501px;top:144px;width:741px;height:446px;background:#8080c8;"></div>
<div class="abs" style="left:501px;top:590px;width:741px;height:18px;background:#f0f0f0;border-top:1px solid #d4d4d4"></div>
<div class="abs" style="left:505px;top:595.60px;font-size:12px;line-height:12px;color:#3c3c3c;font-family:'Liberation Mono',monospace;white-space:pre;transform:scaleX(0.79);transform-origin:0 0;font-weight:bold;">7 atoms, 24 electrons, neutral, singlet</div>
<div class="abs" style="left:1092px;top:593px;width:1px;height:13px;background:#d8d8d8;"></div>
<div class="abs" style="left:1096px;top:593px;width:1px;height:13px;background:#d8d8d8;"></div>
<div class="abs" style="left:1100px;top:595.60px;font-size:12px;line-height:12px;color:#3c3c3c;font-family:'Liberation Mono',monospace;white-space:pre;transform:scaleX(0.79);transform-origin:0 0;font-weight:bold;">Build</div>
<div class="abs" style="left:1130px;top:593px;width:1px;height:13px;background:#d8d8d8;"></div>
<div class="abs" style="left:1133px;top:595.60px;font-size:12px;line-height:12px;color:#3c3c3c;font-family:'Liberation Mono',monospace;white-space:pre;transform:scaleX(0.79);transform-origin:0 0;font-weight:bold;">Select Placement</div>
<div class="abs" style="left:1226px;top:593px;width:1px;height:13px;background:#d8d8d8;"></div>
<svg class="abs" style="left:1232px;top:597px;" width="9" height="9" viewBox="0 0 9 9"><g fill="#a8a8a8"><rect x="6" y="0" width="2" height="2"/><rect x="3" y="3" width="2" height="2"/><rect x="6" y="3" width="2" height="2"/><rect x="0" y="6" width="2" height="2"/><rect x="3" y="6" width="2" height="2"/><rect x="6" y="6" width="2" height="2"/></g></svg>
<svg class="abs" style="left:501px;top:144px" width="741" height="446" viewBox="501 144 741 446"><defs><radialGradient id="gC" cx=".32" cy=".3" r=".85"><stop offset="0" stop-color="#f4f4f4"/><stop offset=".07" stop-color="#d0d0d0"/><stop offset=".2" stop-color="#9c9c9c"/><stop offset=".45" stop-color="#868686"/><stop offset=".66" stop-color="#686868"/><stop offset=".84" stop-color="#424242"/><stop offset="1" stop-color="#323232"/></radialGradient><radialGradient id="gH" cx=".34" cy=".3" r=".85"><stop offset="0" stop-color="#ffffff"/><stop offset=".15" stop-color="#f2f2f2"/><stop offset=".42" stop-color="#d6d6d6"/><stop offset=".7" stop-color="#a4a4a4"/><stop offset="1" stop-color="#6e6e6e"/></radialGradient><radialGradient id="gO" cx=".32" cy=".3" r=".85"><stop offset="0" stop-color="#ff9090"/><stop offset=".08" stop-color="#ff3030"/><stop offset=".22" stop-color="#ff0000"/><stop offset=".5" stop-color="#e80000"/><stop offset=".7" stop-color="#b00000"/><stop offset=".86" stop-color="#780000"/><stop offset="1" stop-color="#5a0000"/></radialGradient></defs><g stroke-linecap="round"><line x1="755" y1="354" x2="772" y2="372" stroke="#8a8a8a" stroke-width="4"/><line x1="754.5" y1="353.5" x2="771.5" y2="371.5" stroke="#eeeeee" stroke-width="2.0"/><line x1="776" y1="400" x2="764" y2="424" stroke="#8a8a8a" stroke-width="4"/><line x1="775.5" y1="399.5" x2="763.5" y2="423.5" stroke="#eeeeee" stroke-width="2.0"/><line x1="835" y1="398" x2="837" y2="414" stroke="#8a8a8a" stroke-width="4"/><line x1="834.5" y1="397.5" x2="836.5" y2="413.5" stroke="#eeeeee" stroke-width="2.0"/><line x1="838.5" y1="357" x2="853.5" y2="337" stroke="#8a8a8a" stroke-width="2.6"/><line x1="838.0" y1="356.5" x2="853.0" y2="336.5" stroke="#eeeeee" stroke-width="1.3"/><line x1="844.5" y1="361" x2="859.5" y2="341" stroke="#8a8a8a" stroke-width="2.6"/><line x1="844.0" y1="360.5" x2="859.0" y2="340.5" stroke="#eeeeee" stroke-width="1.3"/></g><circle cx="817" cy="372" r="15" fill="url(#gH)"/><circle cx="742.6" cy="342.6" r="16" fill="url(#gH)"/><circle cx="758.8" cy="436" r="16" fill="url(#gH)"/><circle cx="836" cy="424" r="16" fill="url(#gH)"/><circle cx="867" cy="321.3" r="22.5" fill="url(#gO)"/><circle cx="783.8" cy="384" r="22" fill="url(#gC)"/><line x1="795" y1="382" x2="818" y2="379" stroke="#8a8a8a" stroke-width="3.6"/><line x1="794.5" y1="381.5" x2="817.5" y2="378.5" stroke="#eeeeee" stroke-width="1.8"/><circle cx="832.3" cy="378.6" r="22.2" fill="url(#gC)"/></svg>
</body></html>
